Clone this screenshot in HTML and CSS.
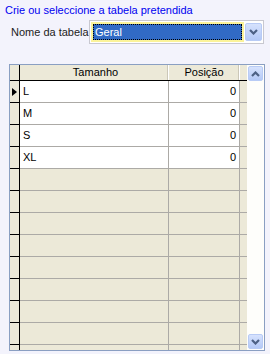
FILE: index.html
```
<!DOCTYPE html>
<html lang="pt">
<head>
  <meta charset="UTF-8" />
  <title>Tabela</title>
  <link rel="stylesheet" href="styles.css">
</head>
<body>

<div class="title">Crie ou seleccione a tabela pretendida</div>

<div class="field">
  <label>Nome da tabela</label>
  <div class="select">
    <div class="select-value"><span>Geral</span></div>
    <div class="select-btn">
      <svg width="9" height="6" viewBox="0 0 9 6"><path d="M1 1 L4.5 4.5 L8 1" fill="none" stroke="#4d6185" stroke-width="2.2"/></svg>
    </div>
  </div>
</div>

<div class="grid">
  <div class="grid-body">
    <div class="row head">
      <div class="rh"></div>
      <div class="cell c1">Tamanho</div>
      <div class="cell c2">Posição</div>
      <div class="fill"></div>
    </div>
    <div class="row data">
      <div class="rh"><span class="arrow"></span></div>
      <div class="cell c1">L</div>
      <div class="cell c2 num">0</div>
      <div class="fill"></div>
    </div>
    <div class="row data">
      <div class="rh"></div>
      <div class="cell c1">M</div>
      <div class="cell c2 num">0</div>
      <div class="fill"></div>
    </div>
    <div class="row data">
      <div class="rh"></div>
      <div class="cell c1">S</div>
      <div class="cell c2 num">0</div>
      <div class="fill"></div>
    </div>
    <div class="row data">
      <div class="rh"></div>
      <div class="cell c1">XL</div>
      <div class="cell c2 num">0</div>
      <div class="fill"></div>
    </div>
    <div class="row"><div class="rh"></div><div class="cell c1"></div><div class="cell c2"></div><div class="fill"></div></div>
    <div class="row"><div class="rh"></div><div class="cell c1"></div><div class="cell c2"></div><div class="fill"></div></div>
    <div class="row"><div class="rh"></div><div class="cell c1"></div><div class="cell c2"></div><div class="fill"></div></div>
    <div class="row"><div class="rh"></div><div class="cell c1"></div><div class="cell c2"></div><div class="fill"></div></div>
    <div class="row"><div class="rh"></div><div class="cell c1"></div><div class="cell c2"></div><div class="fill"></div></div>
    <div class="row"><div class="rh"></div><div class="cell c1"></div><div class="cell c2"></div><div class="fill"></div></div>
    <div class="row"><div class="rh"></div><div class="cell c1"></div><div class="cell c2"></div><div class="fill"></div></div>
    <div class="row"><div class="rh"></div><div class="cell c1"></div><div class="cell c2"></div><div class="fill"></div></div>
    <div class="row"><div class="rh"></div><div class="cell c1"></div><div class="cell c2"></div><div class="fill"></div></div>
  </div>
  <div class="scrollbar">
    <div class="sb-btn">
      <svg width="9" height="6" viewBox="0 0 9 6"><path d="M1 5 L4.5 1.5 L8 5" fill="none" stroke="#4d6185" stroke-width="2.2"/></svg>
    </div>
    <div class="sb-btn">
      <svg width="9" height="6" viewBox="0 0 9 6"><path d="M1 1 L4.5 4.5 L8 1" fill="none" stroke="#4d6185" stroke-width="2.2"/></svg>
    </div>
  </div>
</div>

</body>
</html>
```

FILE: styles.css
```
* { box-sizing: border-box; font-family: 'Liberation Sans', Arial, sans-serif; }
body {
  margin: 0;
  background: #f3f3fc;
  font-size: 11px;
  color: #000;
}
.title {
  color: #0000f0;
  padding: 4px 0 0 5px;
  height: 20px;
  line-height: 13px;
}
.field {
  display: flex;
  align-items: center;
  height: 24px;
}
.field label {
  width: 89px;
  padding-left: 11px;
  color: #222;
}
.select {
  display: flex;
  width: 175px;
  height: 24px;
  border: 1px solid #c8c8d0;
  background: #fff;
  padding: 1px;
}
.select-value {
  flex: 1;
  border: 2px solid #fbf39a;
  background: #fbf39a;
}
.select-value span {
  display: block;
  height: 100%;
  border: 1px dotted #000;
  background: #316ac5;
  color: #fff;
  padding-left: 1px;
  line-height: 14px;
}
.select-btn {
  width: 17px;
  margin: 1px 0 1px 1px;
  border: 1px solid #b8cbf5;
  border-radius: 2px;
  background: linear-gradient(#d6e2fd, #b4c9f7);
  display: flex;
  align-items: center;
  justify-content: center;
}

/* Data grid */
.grid {
  display: flex;
  width: 256px;
  height: 287px;
  margin: 20px 0 0 9px;
  border: 1px solid #8a9fc2;
  overflow: hidden;
}
.grid-body {
  width: 237px;
  background: #ece9d8;
}
.row {
  display: flex;
  height: 22px;
  border-bottom: 1px solid #acaaa6;
}
.row.head {
  height: 16px;
  border-bottom: 1px solid #000;
}
.rh {
  width: 10px;
  border-right: 1px solid #000;
  display: flex;
  align-items: center;
  position: relative;
}
.row:not(.head) .rh::after {
  content: "";
  position: absolute;
  left: 0;
  right: -1px;
  bottom: -1px;
  height: 1px;
  background: #000;
}
.arrow {
  display: block;
  margin-left: 2px;
  border-left: 5px solid #000;
  border-top: 4px solid transparent;
  border-bottom: 4px solid transparent;
}
.cell {
  border-right: 1px solid #acaaa6;
  line-height: 20px;
  padding: 0 3px;
  white-space: nowrap;
}
.c1 { width: 149px; }
.c2 { width: 71px; }
.fill { flex: 1; }
.data .c1, .data .c2 { background: #fff; }
.num { text-align: right; }
.head .cell {
  text-align: center;
  line-height: 15px;
  border-right: 1px solid #fff;
  box-shadow: inset -1px 0 0 #cbc7b8;
}
.head .c1 { padding-right: 0; }

.scrollbar {
  width: 17px;
  background: #fefefb;
  display: flex;
  flex-direction: column;
  justify-content: space-between;
  padding: 1px;
}
.sb-btn {
  height: 15px;
  border: 1px solid #b8cbf5;
  border-radius: 2px;
  background: linear-gradient(#d6e2fd, #b4c9f7);
  display: flex;
  align-items: center;
  justify-content: center;
}
```
